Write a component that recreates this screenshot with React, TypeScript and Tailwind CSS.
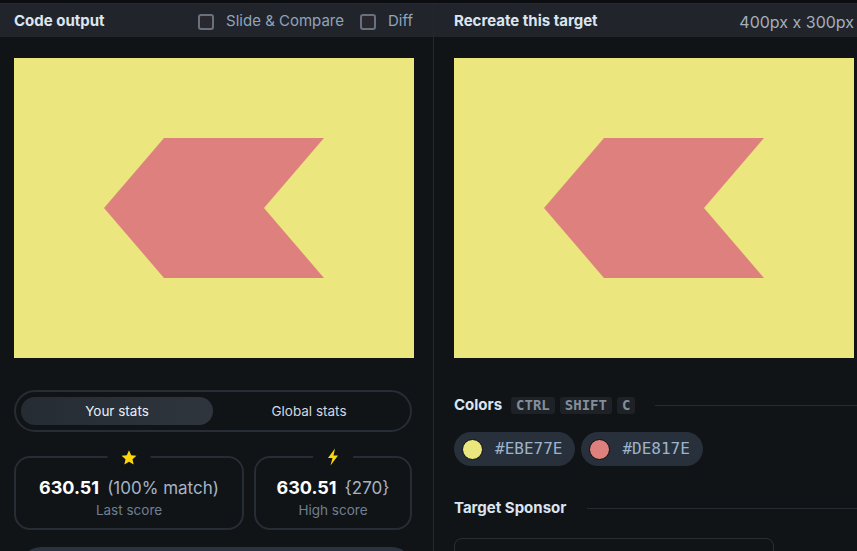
import React from "react";

const sans = { fontFamily: "Inter, 'Noto Sans', sans-serif" };
const mono = { fontFamily: "'DejaVu Sans Mono', 'Liberation Mono', monospace" };

function Target() {
  return (
    <div className="w-[400px] h-[300px] bg-[#EBE77E]">
      <svg width="400" height="300" viewBox="0 0 400 300">
        <polygon points="150,80 310,80 250,150 310,220 150,220 90,150" fill="#DE817E" />
      </svg>
    </div>
  );
}

function Checkbox({ label }: { label: string }) {
  return (
    <label className="flex items-center gap-[12px] text-[15px] text-[#8fa3bb]">
      <span className="w-[16px] h-[16px] rounded-[3px] border-2 border-[#6b717c] bg-[#29282f]" />
      {label}
    </label>
  );
}

function Star() {
  return (
    <svg width="17" height="17" viewBox="0 0 24 24">
      <path d="M12 1.8l3.1 6.9 7.4.7-5.6 5 1.7 7.4L12 17.9l-6.6 3.9 1.7-7.4-5.6-5 7.4-.7z" fill="#ffd60a" />
    </svg>
  );
}

function Bolt() {
  return (
    <svg width="14" height="18" viewBox="0 0 14 18">
      <path d="M9 0.5L2 10h4.5L4.5 17.5 12 7.5H7.5L9 0.5z" fill="#ffd60a" />
    </svg>
  );
}

function StatCard({ icon, value, extra, label, w }: { icon: React.ReactNode; value: string; extra: string; label: string; w: string }) {
  return (
    <div className={`relative ${w} h-[74px] rounded-[16px] border-2 border-[#262d35] flex flex-col items-center pt-[20px]`}>
      <div className="absolute -top-[11px] left-1/2 -translate-x-1/2 px-[13px] bg-[#111417] flex items-center justify-center h-[20px]">
        {icon}
      </div>
      <div className="flex items-baseline gap-[8px] leading-[20px]">
        <span className="text-[18px] font-bold text-white">{value}</span>
        <span className="text-[17px] text-[#a5b3c4]">{extra}</span>
      </div>
      <div className="text-[13.5px] text-[#6f7f92] mt-[3px] leading-[18px]">{label}</div>
    </div>
  );
}

function Kbd({ children }: { children: string }) {
  return (
    <span className="px-[5px] h-[17px] flex items-center rounded-[3px] bg-[#1e2227] text-[14px] font-bold text-[#838e9b]" style={mono}>
      {children}
    </span>
  );
}

function ColorPill({ hex }: { hex: string }) {
  return (
    <div className="flex items-center h-[34px] pl-[8px] pr-[13px] rounded-full bg-[#28313b] gap-[12px]">
      <span className="w-[21px] h-[21px] rounded-full border-[1.5px] border-[#0d0f11]" style={{ background: hex }} />
      <span className="text-[16px] text-[#9db3cc]" style={mono}>{hex}</span>
    </div>
  );
}

export default function App() {
  return (
    <div className="w-[857px] h-[551px] overflow-hidden bg-[#111417] flex flex-col" style={sans}>
      <div className="h-[4px] bg-[#0b0d10] border-b border-[#262b31] shrink-0" />
      <div className="flex flex-1">
        {/* left panel */}
        <div className="w-[434px] border-r border-[#24282e] flex flex-col">
          <div className="h-[33px] bg-[#21252b] flex items-center px-[14px] pt-[2px]">
            <span className="text-[15px] font-bold text-[#dce5f0]">Code output</span>
            <div className="ml-auto flex items-center gap-[16px] pr-[6px]">
              <Checkbox label="Slide & Compare" />
              <Checkbox label="Diff" />
            </div>
          </div>
          <div className="px-[14px] pt-[21px]">
            <Target />
            <div className="mt-[32px] w-[398px] h-[42px] rounded-full border-2 border-[#262d35] p-[5px] flex">
              <div className="flex-1 rounded-full bg-gradient-to-r from-[#252c34] to-[#2e353d] flex items-center justify-center text-[13.5px] text-[#e8eef5]">
                Your stats
              </div>
              <div className="flex-1 flex items-center justify-center text-[13.5px] text-[#cfd8e3]">Global stats</div>
            </div>
            <div className="mt-[24px] flex gap-[10px] w-[398px]">
              <StatCard icon={<Star />} value="630.51" extra="(100% match)" label="Last score" w="w-[230px]" />
              <StatCard icon={<Bolt />} value="630.51" extra="{270}" label="High score" w="w-[158px]" />
            </div>
            <div className="mt-[17px] mx-[7px] h-[40px] rounded-full bg-[#2a3440]" />
          </div>
        </div>
        {/* right panel */}
        <div className="flex-1 flex flex-col">
          <div className="h-[33px] bg-[#21252b] flex items-center pl-[20px] pr-[3px] pt-[2px]">
            <span className="text-[15px] font-bold text-[#dce5f0]">Recreate this target</span>
            <span className="ml-auto text-[16px] text-[#a3afbd]">400px x 300px</span>
          </div>
          <div className="pl-[20px] pt-[21px]">
            <Target />
            <div className="mt-[39px] flex items-center h-[17px]">
              <span className="text-[15px] font-bold text-[#dce5f0] mr-[9px]">Colors</span>
              <div className="flex gap-[5px]">
                <Kbd>CTRL</Kbd>
                <Kbd>SHIFT</Kbd>
                <Kbd>C</Kbd>
              </div>
              <div className="flex-1 ml-[20px] h-px bg-[#262b31]" />
            </div>
            <div className="mt-[18px] flex gap-[6px]">
              <ColorPill hex="#EBE77E" />
              <ColorPill hex="#DE817E" />
            </div>
            <div className="mt-[34px] flex items-center h-[17px]">
              <span className="text-[15px] font-bold text-[#dce5f0]">Target Sponsor</span>
              <div className="flex-1 ml-[21px] h-px bg-[#262b31]" />
            </div>
            <div className="mt-[21px] w-[320px] h-[60px] rounded-[8px] border border-[#2a2d32]" />
          </div>
        </div>
      </div>
    </div>
  );
}
